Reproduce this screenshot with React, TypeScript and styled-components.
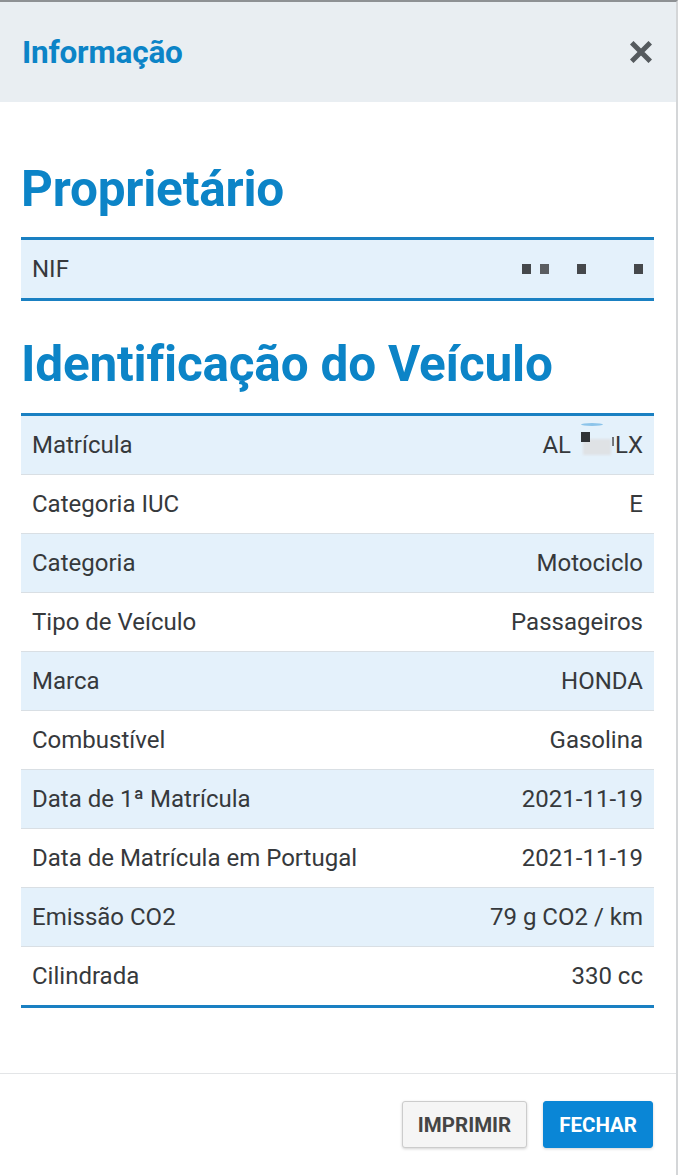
import styled, { createGlobalStyle } from "styled-components";

const rows = [
  { label: "Matrícula", value: "plate" },
  { label: "Categoria IUC", value: "E" },
  { label: "Categoria", value: "Motociclo" },
  { label: "Tipo de Veículo", value: "Passageiros" },
  { label: "Marca", value: "HONDA" },
  { label: "Combustível", value: "Gasolina" },
  { label: "Data de 1ª Matrícula", value: "2021-11-19" },
  { label: "Data de Matrícula em Portugal", value: "2021-11-19" },
  { label: "Emissão CO2", value: "79 g CO2 / km" },
  { label: "Cilindrada", value: "330 cc" },
];

const GlobalStyle = createGlobalStyle`
  html, body {
    margin: 0;
    padding: 0;
    background: #ffffff;
  }
  * {
    box-sizing: border-box;
  }
`;

// redacted plate number, drawn as the blurred blocks in the screenshot
const Plate = () => (
  <PlateWrap>
    AL
    <Blur>
      <BlurArc />
      <BlurDark />
      <BlurLight />
    </Blur>
    <Tick />
    LX
  </PlateWrap>
);

const Nif = () => (
  <NifWrap>
    <Dot $gap={0} />
    <Dot $gap={9} $soft />
    <Dot $gap={28} />
    <Dot $gap={48} />
  </NifWrap>
);

const CloseIcon = () => (
  <svg width="22" height="22" viewBox="0 0 22 22">
    <path
      d="M3.5 3.5 L18.5 18.5 M18.5 3.5 L3.5 18.5"
      stroke="#555a5e"
      strokeWidth="5"
      strokeLinecap="square"
    />
  </svg>
);

const App = () => {
  return (
    <>
      <GlobalStyle />
      <Dialog>
        <Header>
          <Title>Informação</Title>
          <CloseButton aria-label="Fechar">
            <CloseIcon />
          </CloseButton>
        </Header>
        <Body>
          <SectionTitle>Proprietário</SectionTitle>
          <Table>
            <Row $striped>
              <Label>NIF</Label>
              <Value>
                <Nif />
              </Value>
            </Row>
          </Table>
          <SectionTitle>Identificação do Veículo</SectionTitle>
          <Table>
            {rows.map((row, i) => (
              <Row key={row.label} $striped={i % 2 === 0}>
                <Label>{row.label}</Label>
                <Value>{row.value === "plate" ? <Plate /> : row.value}</Value>
              </Row>
            ))}
          </Table>
        </Body>
        <Footer>
          <Button>IMPRIMIR</Button>
          <Button $primary>FECHAR</Button>
        </Footer>
      </Dialog>
    </>
  );
};

const Dialog = styled.div`
  width: 678px;
  min-height: 1175px;
  border-top: 2px solid #8e9194;
  border-right: 2px solid #d4d6d8;
  font-family: Roboto, "Liberation Sans", sans-serif;
  display: flex;
  flex-direction: column;
  background: #ffffff;
`;

const Header = styled.div`
  height: 100px;
  background: #e9eef2;
  display: flex;
  align-items: center;
  justify-content: space-between;
  padding: 0 24px 0 22px;
`;

const Title = styled.h1`
  margin: 0;
  font-size: 31.5px;
  font-weight: 700;
  color: #0c84c7;
  letter-spacing: -0.2px;
`;

const CloseButton = styled.button`
  border: none;
  background: none;
  padding: 0;
  display: flex;
  cursor: pointer;
`;

const Body = styled.div`
  padding: 58px 22px 64px 21px;
  flex: 1;
`;

const SectionTitle = styled.h2`
  margin: 0 0 18px;
  font-size: 49.5px;
  line-height: 1.2;
  font-weight: 700;
  color: #0c84c7;
  letter-spacing: -0.2px;
  & + div + & {
    margin-top: 34px;
  }
`;

const Table = styled.div`
  border-top: 3px solid #1a80c2;
  border-bottom: 3px solid #1a80c2;
`;

const Row = styled.div<{ $striped?: boolean }>`
  height: 59px;
  display: flex;
  align-items: center;
  justify-content: space-between;
  padding: 0 11px;
  background: ${(p) => (p.$striped ? "#e4f1fb" : "#ffffff")};
  border-top: 1px solid #d9dfe4;
  font-size: 24px;
  color: #36393c;
  &:first-child {
    border-top: none;
    height: 58px;
  }
`;

const Label = styled.span``;

const Value = styled.span`
  display: flex;
  justify-content: flex-end;
  text-align: right;
`;

const NifWrap = styled.span`
  display: flex;
  align-items: center;
  height: 10px;
`;

const Dot = styled.span<{ $gap: number; $soft?: boolean }>`
  display: block;
  flex-shrink: 0;
  width: 9px;
  height: 10px;
  margin-left: ${(p) => p.$gap}px;
  background: ${(p) => (p.$soft ? "#5a5d60" : "#45484b")};
  filter: blur(0.6px);
`;

const PlateWrap = styled.span`
  display: inline-flex;
  align-items: center;
`;

const Blur = styled.span`
  position: relative;
  display: inline-block;
  width: 34px;
  height: 24px;
  margin-left: 8px;
`;

const BlurArc = styled.span`
  position: absolute;
  left: 2px;
  top: -10px;
  width: 22px;
  height: 3px;
  border-radius: 50%;
  background: #8cc4ea;
`;

const BlurDark = styled.span`
  position: absolute;
  left: 2px;
  top: -1px;
  width: 9px;
  height: 10px;
  background: #303336;
  z-index: 1;
`;

const BlurLight = styled.span`
  position: absolute;
  left: 4px;
  top: 6px;
  width: 28px;
  height: 16px;
  background: #dfe2e5;
  filter: blur(1px);
`;

const Tick = styled.span`
  display: inline-block;
  width: 2px;
  height: 9px;
  margin: 0 1px 6px -1px;
  background: #707377;
`;

const Footer = styled.div`
  border-top: 1px solid #e3e5e7;
  display: flex;
  justify-content: flex-end;
  gap: 16px;
  padding: 27px 23px 27px 22px;
`;

const Button = styled.button<{ $primary?: boolean }>`
  height: 47px;
  padding: 0 15px;
  font-family: Roboto, "Liberation Sans", sans-serif;
  font-size: 20.5px;
  font-weight: 700;
  border-radius: 3px;
  cursor: pointer;
  color: ${(p) => (p.$primary ? "#ffffff" : "#454545")};
  background: ${(p) => (p.$primary ? "#0a86d6" : "#f5f5f5")};
  border: 1px solid ${(p) => (p.$primary ? "#0a86d6" : "#cccccc")};
  box-shadow: 0 1px 3px rgba(0, 0, 0, 0.18);
`;

export default App;
